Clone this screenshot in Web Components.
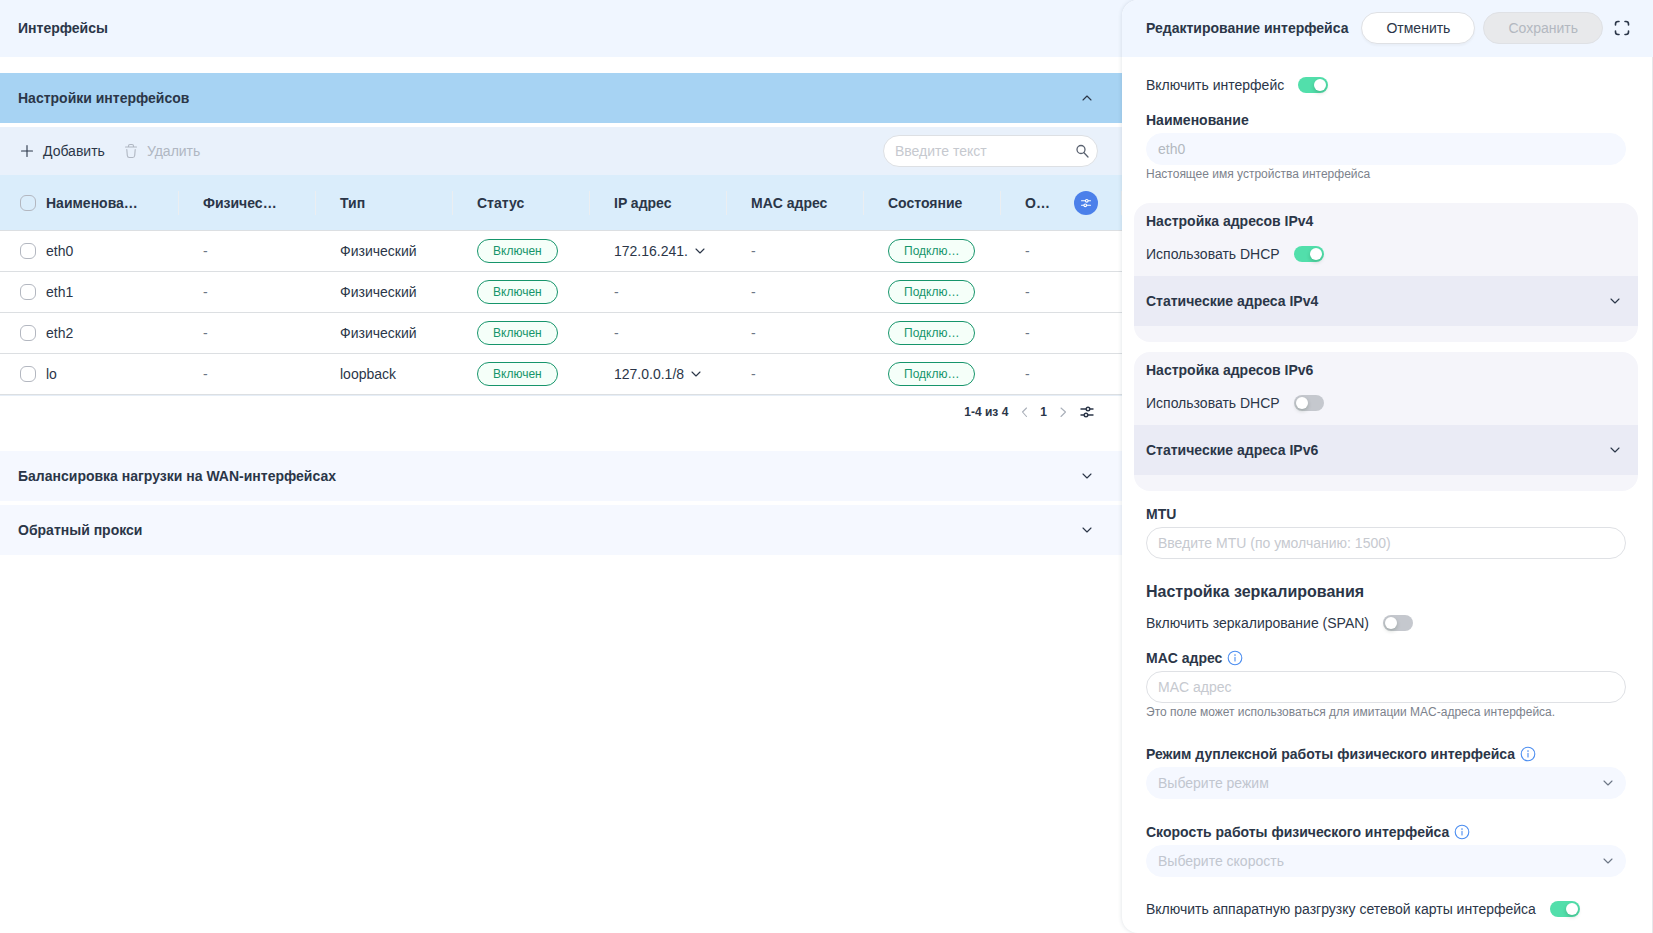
<!DOCTYPE html>
<html lang="ru">
<head>
<meta charset="utf-8">
<title>Интерфейсы</title>
<style>
    body {
        margin: 0;
        background: #fff;
        color: #2b3648;
        font: 14px/20px "Liberation Sans", Arial, sans-serif;
    }
</style>
</head>
<body>
<net-app></net-app>

<script>
const ICONS = {
    plus: '<path d="M8 2.500v11M2.500 8h11"/>',
    trash: '<path d="M2.500 4h11M5.500 4V3q0-1.500 1.500-1.500h2q1.500 0 1.500 1.500v1M3.800 6.500l.5 6q.2 2 2 2h3.400q1.800 0 2-2l.5-6"/>',
    search: '<circle cx="7" cy="6.500" r="4"/><path d="M10 9.800l4 4.200"/>',
    down: '<path d="M4 6l4 4 4-4"/>',
    up: '<path d="M4 10l4-4 4 4"/>',
    left: '<path d="M10.500 4L6.500 8l4 4.500"/>',
    right: '<path d="M6 4l4.500 4L6 12.500"/>',
    sliders: '<path d="M2 5h5M11 5h3M2 11h3M9 11h5"/><circle cx="9" cy="5" r="1.800"/><circle cx="7" cy="11" r="1.800"/>',
    expand: '<path d="M1.500 5V4q0-2.500 2.500-2.500h1M11 1.500h1q2.500 0 2.500 2.500v1M14.500 11v1q0 2.500-2.500 2.500h-1M5 14.500H4q-2.500 0-2.500-2.500v-1"/>',
    info: '<circle cx="8" cy="8" r="6.800"/><path d="M8 7.200v3.800M8 4.500v1"/>'
};

class NetIcon extends HTMLElement {
    constructor() {
        super();
        this.attachShadow({ mode: 'open' });
    }

    connectedCallback() {
        this.shadowRoot.innerHTML = `
        <style>
            :host { display: inline-block; flex: none; width: 16px; height: 16px; }
            svg { display: block; width: 100%; height: 100%; fill: none; stroke: currentColor; stroke-width: var(--line, 1.1); stroke-linecap: round; stroke-linejoin: round; }
        </style>
        <svg viewBox="0 0 16 16" aria-hidden="true">${ICONS[this.getAttribute('name')]}</svg>`;
    }
}
customElements.define('net-icon', NetIcon);

class NetSwitch extends HTMLElement {
    constructor() {
        super();
        this.attachShadow({ mode: 'open' });
    }

    connectedCallback() {
        this.shadowRoot.innerHTML = `
        <style>
            :host { display: block; }
            label { display: inline-flex; align-items: center; gap: 14px; }
            input { appearance: none; box-sizing: border-box; width: 30px; height: 16px; margin: 0; padding: 2px; display: flex; border-radius: 8px; background: #c5c8ce; cursor: pointer; }
            input::before { content: ""; width: 12px; height: 12px; border-radius: 50%; background: #fff; box-shadow: 0 2px 4px rgba(0, 35, 11, .2); }
            input:checked { background: #52dfab; justify-content: flex-end; }
        </style>
        <label><slot></slot><input type="checkbox" role="switch" ${this.hasAttribute('checked') ? 'checked' : ''}></label>`;
    }
}
customElements.define('net-switch', NetSwitch);

class NetField extends HTMLElement {
    constructor() {
        super();
        this.attachShadow({ mode: 'open' });
    }

    control() {
        const hint = this.getAttribute('placeholder') || '';
        const off = this.hasAttribute('disabled') ? 'disabled' : '';
        if (this.hasAttribute('select')) {
            return `<select id="field" ${off}><option>${hint}</option></select><net-icon name="down"></net-icon>`;
        }
        return `<input id="field" type="text" placeholder="${hint}" value="${this.getAttribute('value') || ''}" ${off}>`;
    }

    connectedCallback() {
        const info = this.hasAttribute('info') ? '<net-icon name="info"></net-icon>' : '';
        const help = this.hasAttribute('help') ? `<small>${this.getAttribute('help')}</small>` : '';
        this.shadowRoot.innerHTML = `
        <style>
            :host { display: block; }
            .caption { display: flex; align-items: center; gap: 5px; margin-bottom: 3px; }
            .caption net-icon { color: #4b8df0; }
            label { font-weight: bold; }
            .box { display: grid; align-items: center; }
            .box > * { grid-area: 1 / 1; }
            input, select { appearance: none; box-sizing: border-box; width: 100%; height: 32px; margin: 0; padding: 0 11px; border: 1px solid #dfe1e5; border-radius: 16px; background: #fff; color: inherit; font: inherit; }
            input::placeholder { color: #c6c9cf; opacity: 1; }
            input:disabled, select:disabled { border-color: #f5f8ff; background: #f5f8ff; color: #b3b8c0; opacity: 1; }
            select:disabled { color: #c1c6cf; }
            .box net-icon { justify-self: end; margin-right: 10px; color: #6c7686; }
            small { display: block; margin-top: 1px; color: #7c828c; font-size: 12px; line-height: 16px; }
        </style>
        <div class="caption"><label for="field">${this.getAttribute('label')}</label>${info}</div>
        <div class="box">${this.control()}</div>
        ${help}`;
    }
}
customElements.define('net-field', NetField);

class NetSection extends HTMLElement {
    constructor() {
        super();
        this.attachShadow({ mode: 'open' });
    }

    connectedCallback() {
        const open = this.hasAttribute('open');
        this.shadowRoot.innerHTML = `
        <style>
            :host { display: block; --bar: #f5f8ff; --pad: 18px; --end: 27px; }
            :host([open]) { --bar: #a7d3f3; }
            button { display: flex; align-items: center; justify-content: space-between; width: 100%; height: 50px; margin: 0; padding: 0 var(--end) 0 var(--pad); border: 0; background: var(--bar); color: inherit; font: inherit; font-weight: bold; text-align: left; cursor: pointer; }
            div { padding-top: 4px; }
        </style>
        <button aria-expanded="${open}">${this.getAttribute('label')}<net-icon name="${open ? 'up' : 'down'}"></net-icon></button>
        ${open ? '<div><slot></slot></div>' : ''}`;
    }
}
customElements.define('net-section', NetSection);

class NetTable extends HTMLElement {
    constructor() {
        super();
        this.attachShadow({ mode: 'open' });
        this.columns = ['Физичес…', 'Тип', 'Статус', 'IP адрес', 'MAC адрес', 'Состояние'];
        this.rows = [
            { name: 'eth0', type: 'Физический', ip: '172.16.241.' },
            { name: 'eth1', type: 'Физический', ip: '' },
            { name: 'eth2', type: 'Физический', ip: '' },
            { name: 'lo', type: 'loopback', ip: '127.0.0.1/8' }
        ];
    }

    connectedCallback() {
        const dash = '<span class="dash">-</span>';
        this.shadowRoot.innerHTML = `
        <style>
            :host { display: block; }
            .tools { display: flex; align-items: center; height: 48px; padding: 0 24px 0 19px; background: #e9f1fb; }
            .tools > button { display: flex; align-items: center; gap: 8px; margin-right: 18px; }
            button { padding: 0; border: 0; background: none; color: inherit; font: inherit; cursor: pointer; }
            .tools > button:disabled { color: #b0b7c2; cursor: default; }
            .search { display: flex; align-items: center; box-sizing: border-box; width: 215px; height: 32px; margin-left: auto; padding: 0 7px 0 11px; border: 1px solid #dde0e4; border-radius: 16px; background: #fff; }
            .search input { flex: 1; min-width: 0; padding: 0; border: 0; outline: 0; background: none; font: inherit; }
            .search input::placeholder { color: #c6c9cf; opacity: 1; }
            .search net-icon { color: #5a6270; --line: 1.3; }
            table { width: 100%; border-collapse: separate; border-spacing: 0; table-layout: fixed; border-bottom: 1px solid #e6eef7; }
            .first { width: 179px; }
            .last { width: 121px; }
            th, td { box-sizing: border-box; padding: 0 0 0 24px; border-bottom: 1px solid #dcdfe2; text-align: left; white-space: nowrap; overflow: hidden; }
            th { height: 56px; background: #daedfb; }
            td { height: 41px; }
            th:first-child, td:first-child { padding-left: 20px; }
            .head { display: flex; align-items: center; justify-content: space-between; height: 24px; border-right: 1px solid #ebeef1; }
            th:last-child .head { padding-right: 23px; }
            .pick { display: flex; align-items: center; gap: 10px; }
            .pick input { appearance: none; box-sizing: border-box; width: 16px; height: 16px; margin: 0; border: 1px solid #b3b7c0; border-radius: 6px; background: transparent; }
            .dash { color: #6c7686; }
            .badge { display: inline-block; box-sizing: border-box; height: 24px; padding: 0 15px; border: 1px solid #16956b; border-radius: 12px; background: #f5fff9; color: #16956b; font-size: 12px; line-height: 22px; vertical-align: middle; }
            .ip { display: flex; align-items: center; gap: 4px; }
            .columns { display: grid; place-items: center; width: 24px; height: 24px; border-radius: 50%; background: #4b80ea; color: #fff; }
            .columns net-icon { width: 12px; height: 12px; --line: 1.4; }
            .pages { display: flex; align-items: center; justify-content: flex-end; height: 32px; margin-bottom: 23px; padding-right: 27px; font-size: 12px; font-weight: bold; }
            .pages > * + * { margin-left: 8px; }
            .pages .move { display: flex; color: #a9afb9; }
            .pages .view { display: flex; --line: 1.4; }
        </style>
        <div class="tools">
            <button><net-icon name="plus"></net-icon>Добавить</button>
            <button disabled><net-icon name="trash"></net-icon>Удалить</button>
            <div class="search"><input type="text" placeholder="Введите текст" aria-label="Поиск"><net-icon name="search"></net-icon></div>
        </div>
        <table>
            <colgroup><col class="first"><col><col><col><col><col><col><col class="last"></colgroup>
            <thead><tr>
                <th><div class="head"><label class="pick"><input type="checkbox">Наименова…</label></div></th>
                ${this.columns.map(c => `<th><div class="head">${c}</div></th>`).join('')}
                <th><div class="head">О…<button class="columns" aria-label="Колонки"><net-icon name="sliders"></net-icon></button></div></th>
            </tr></thead>
            <tbody>
                ${this.rows.map(r => `
                    <tr>
                        <td><label class="pick"><input type="checkbox">${r.name}</label></td>
                        <td>${dash}</td>
                        <td>${r.type}</td>
                        <td><span class="badge">Включен</span></td>
                        <td>${r.ip ? `<button class="ip">${r.ip}<net-icon name="down"></net-icon></button>` : dash}</td>
                        <td>${dash}</td>
                        <td><span class="badge">Подклю…</span></td>
                        <td>${dash}</td>
                    </tr>
                `).join('')}
            </tbody>
        </table>
        <div class="pages">
            <span>1-4 из 4</span>
            <button class="move" aria-label="Назад"><net-icon name="left"></net-icon></button>
            <span>1</span>
            <button class="move" aria-label="Вперёд"><net-icon name="right"></net-icon></button>
            <button class="view" aria-label="Вид"><net-icon name="sliders"></net-icon></button>
        </div>`;
    }
}
customElements.define('net-table', NetTable);

class NetCard extends HTMLElement {
    constructor() {
        super();
        this.attachShadow({ mode: 'open' });
    }

    connectedCallback() {
        const ip = this.getAttribute('ip');
        this.shadowRoot.innerHTML = `
        <style>
            :host { display: block; margin: 0 -12px; padding: 8px 0 16px; border-radius: 16px; background: #f5f5fa; }
            h3 { margin: 0 12px 13px; font-size: 14px; line-height: 20px; }
            net-switch { margin: 0 12px 12px; }
            net-section { --bar: #eaebf5; --pad: 12px; --end: 15px; }
        </style>
        <h3>Настройка адресов ${ip}</h3>
        <net-switch ${this.hasAttribute('dhcp') ? 'checked' : ''}>Использовать DHCP</net-switch>
        <net-section label="Статические адреса ${ip}"></net-section>`;
    }
}
customElements.define('net-card', NetCard);

class NetEditor extends HTMLElement {
    constructor() {
        super();
        this.attachShadow({ mode: 'open' });
    }

    connectedCallback() {
        this.shadowRoot.innerHTML = `
        <style>
            :host { display: flex; flex-direction: column; border-radius: 16px 0 0 16px; background: #fff; box-shadow: 0 0 4px rgba(40, 60, 90, .16); overflow: hidden; }
            header { display: flex; align-items: center; flex: none; box-sizing: border-box; height: 57px; padding: 0 23px 2px 24px; background: #f0f6ff; }
            h2 { flex: 1; margin: 0; font-size: 14px; line-height: 20px; white-space: nowrap; }
            header button { box-sizing: border-box; height: 32px; margin-left: 8px; padding: 0 24px; border: 1px solid #dfe1e5; border-radius: 16px; background: #fff; color: inherit; font: inherit; box-shadow: 0 2px 2px rgba(0, 0, 0, .03); }
            header button:disabled { background: #e8e9eb; color: #b3b8c0; box-shadow: none; }
            header .full { display: flex; align-items: center; margin-left: 11px; padding: 0; border: 0; background: none; box-shadow: none; --line: 1.6; }
            form { flex: 1; min-height: 0; padding: 18px 26px 16px 24px; overflow: hidden; border-right: 1px solid #e6e8eb; }
            net-switch + net-field { margin-top: 15px; }
            net-field + net-card { margin-top: 21px; }
            net-card { margin-bottom: 10px; }
            net-card + net-field { margin-top: 13px; }
            h3 { margin: 21px 0 9px; font-size: 16px; line-height: 24px; }
            net-field + net-field { margin-top: 24px; }
            net-field[select] + net-field { margin-top: 23px; }
            net-field + net-switch { margin-top: 22px; }
        </style>
        <header>
            <h2>Редактирование интерфейса</h2>
            <button>Отменить</button>
            <button disabled>Сохранить</button>
            <button class="full" aria-label="Развернуть"><net-icon name="expand"></net-icon></button>
        </header>
        <form>
            <net-switch checked>Включить интерфейс</net-switch>
            <net-field label="Наименование" value="eth0" help="Настоящее имя устройства интерфейса" disabled></net-field>
            <net-card ip="IPv4" dhcp></net-card>
            <net-card ip="IPv6"></net-card>
            <net-field label="MTU" placeholder="Введите MTU (по умолчанию: 1500)"></net-field>
            <h3>Настройка зеркалирования</h3>
            <net-switch>Включить зеркалирование (SPAN)</net-switch>
            <net-field label="MAC адрес" placeholder="MAC адрес" help="Это поле может использоваться для имитации MAC-адреса интерфейса." info></net-field>
            <net-field label="Режим дуплексной работы физического интерфейса" placeholder="Выберите режим" select info disabled></net-field>
            <net-field label="Скорость работы физического интерфейса" placeholder="Выберите скорость" select info disabled></net-field>
            <net-switch checked>Включить аппаратную разгрузку сетевой карты интерфейса</net-switch>
        </form>`;
    }
}
customElements.define('net-editor', NetEditor);

class NetApp extends HTMLElement {
    constructor() {
        super();
        this.attachShadow({ mode: 'open' });
    }

    connectedCallback() {
        this.shadowRoot.innerHTML = `
        <style>
            :host { display: grid; grid-template-columns: minmax(0, 1122fr) minmax(0, 531fr); height: 100vh; background: linear-gradient(#f0f6ff 57px, #fff 57px); overflow: hidden; }
            header { display: flex; align-items: center; box-sizing: border-box; height: 57px; margin-bottom: 16px; padding: 0 18px 2px; background: #f0f6ff; }
            h1 { margin: 0; font-size: 14px; line-height: 20px; }
            net-section + net-section { margin-top: 4px; }
        </style>
        <main>
            <header><h1>Интерфейсы</h1></header>
            <net-section label="Настройки интерфейсов" open><net-table></net-table></net-section>
            <net-section label="Балансировка нагрузки на WAN-интерфейсах"></net-section>
            <net-section label="Обратный прокси"></net-section>
        </main>
        <net-editor></net-editor>`;
    }
}
customElements.define('net-app', NetApp);
</script>
</body>
</html>
